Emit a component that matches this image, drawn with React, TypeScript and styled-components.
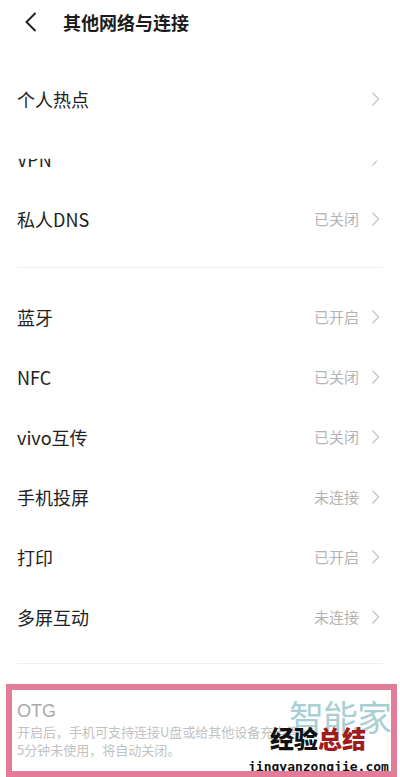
import React from "react";
import styled, { createGlobalStyle } from "styled-components";

const Global = createGlobalStyle`
  html, body { margin: 0; padding: 0; background: #ffffff; }
  body { width: 400px; height: 777px; overflow: hidden;
    font-family: "Noto Sans CJK SC", "Noto Sans", sans-serif; }
`;

const Page = styled.div`
  width: 400px;
  height: 777px;
  display: flex;
  flex-direction: column;
  background: #fff;
`;

const Header = styled.div`
  height: 45px;
  display: flex;
  align-items: center;
  padding-left: 25px;
  gap: 26px;
`;

const Title = styled.div`
  font-size: 18px;
  font-weight: 700;
  color: #1c1c1c;
  line-height: 24px;
`;

const List = styled.div`
  margin-top: 25px;
  display: flex;
  flex-direction: column;
`;

const Row = styled.div`
  height: 60px;
  display: flex;
  align-items: center;
  justify-content: space-between;
  padding: 0 20px 0 17px;
`;

const Label = styled.span<{ $clipped?: boolean }>`
  font-size: 18px;
  line-height: 24px;
  color: #222;
  clip-path: ${(p) => (p.$clipped ? "inset(12px 0 0 0)" : "none")};
`;

const Right = styled.div<{ $clipped?: boolean }>`
  display: flex;
  align-items: center;
  gap: 12px;
  clip-path: ${(p) => (p.$clipped ? "inset(10px 0 0 0)" : "none")};
`;

const Value = styled.span`
  font-size: 15px;
  line-height: 20px;
  color: #b4b4b4;
`;

const Divider = styled.div<{ $top: number; $bottom: number }>`
  height: 1px;
  background: #f0f0f0;
  margin: ${(p) => p.$top}px 17px ${(p) => p.$bottom}px;
`;

const OtgBox = styled.div`
  position: relative;
  margin: 0 3px 0 6px;
  height: 74px;
  border: 6px solid #e27c99;
  padding: 9px 0 0 5px;
  background: #fff;
  overflow: hidden;
`;

const OtgTitle = styled.div`
  font-size: 18px;
  line-height: 24px;
  color: #a9a9a9;
  font-family: "Liberation Sans", "Noto Sans CJK SC", sans-serif;
`;

const OtgDesc = styled.div`
  font-size: 13px;
  line-height: 18px;
  color: #c2c2c2;
  white-space: nowrap;
`;

const Mark = styled.div<{ $left: number; $top: number }>`
  position: absolute;
  left: ${(p) => p.$left}px;
  top: ${(p) => p.$top}px;
  white-space: nowrap;
`;

const Zhi = styled.span`
  font-size: 35px;
  line-height: 40px;
  color: #a9cfd4;
  letter-spacing: -1px;
`;

const Jing = styled.span<{ $red?: boolean }>`
  font-size: 24px;
  line-height: 26px;
  font-weight: 900;
  color: ${(p) => (p.$red ? "#a01c1c" : "#111")};
`;

const Url = styled.span`
  font-family: "DejaVu Sans Mono", monospace;
  font-size: 13px;
  font-weight: 700;
  line-height: 15px;
  color: #111;
  background: #fff;
  padding: 0 1px;
`;

const Chevron = () => (
  <svg width="9" height="16" viewBox="0 0 9 16">
    <polyline points="1.5,1.5 7.5,8 1.5,14.5" fill="none" stroke="#c6c6c6" strokeWidth="1.3" />
  </svg>
);

const Back = () => (
  <svg width="12" height="20" viewBox="0 0 12 20">
    <polyline points="10.5,1 1.5,10 10.5,19" fill="none" stroke="#222" strokeWidth="2" />
  </svg>
);

type Item = { label: string; value?: string; clipped?: boolean };

const group1: Item[] = [
  { label: "个人热点" },
  { label: "VPN", clipped: true },
  { label: "私人DNS", value: "已关闭" },
];

const group2: Item[] = [
  { label: "蓝牙", value: "已开启" },
  { label: "NFC", value: "已关闭" },
  { label: "vivo互传", value: "已关闭" },
  { label: "手机投屏", value: "未连接" },
  { label: "打印", value: "已开启" },
  { label: "多屏互动", value: "未连接" },
];

const renderRow = (it: Item) => (
  <Row key={it.label}>
    <Label $clipped={it.clipped}>{it.label}</Label>
    <Right $clipped={it.clipped}>
      {it.value && <Value>{it.value}</Value>}
      <Chevron />
    </Right>
  </Row>
);

export default function App() {
  return (
    <Page>
      <Global />
      <Header>
        <Back />
        <Title>其他网络与连接</Title>
      </Header>
      <List>
        {group1.map(renderRow)}
        <Divider $top={18} $bottom={19} />
        {group2.map(renderRow)}
        <Divider $top={16} $bottom={20} />
      </List>
      <OtgBox>
        <OtgTitle>OTG</OtgTitle>
        <OtgDesc>开启后，手机可支持连接U盘或给其他设备充电等，</OtgDesc>
        <OtgDesc>5分钟未使用，将自动关闭。</OtgDesc>
        <Mark $left={277} $top={6}>
          <Zhi>智能家</Zhi>
        </Mark>
        <Mark $left={258} $top={35}>
          <Jing>经验</Jing>
          <Jing $red>总结</Jing>
        </Mark>
        <Mark $left={235} $top={62}>
          <Url>jingyanzongjie.com</Url>
        </Mark>
      </OtgBox>
    </Page>
  );
}
